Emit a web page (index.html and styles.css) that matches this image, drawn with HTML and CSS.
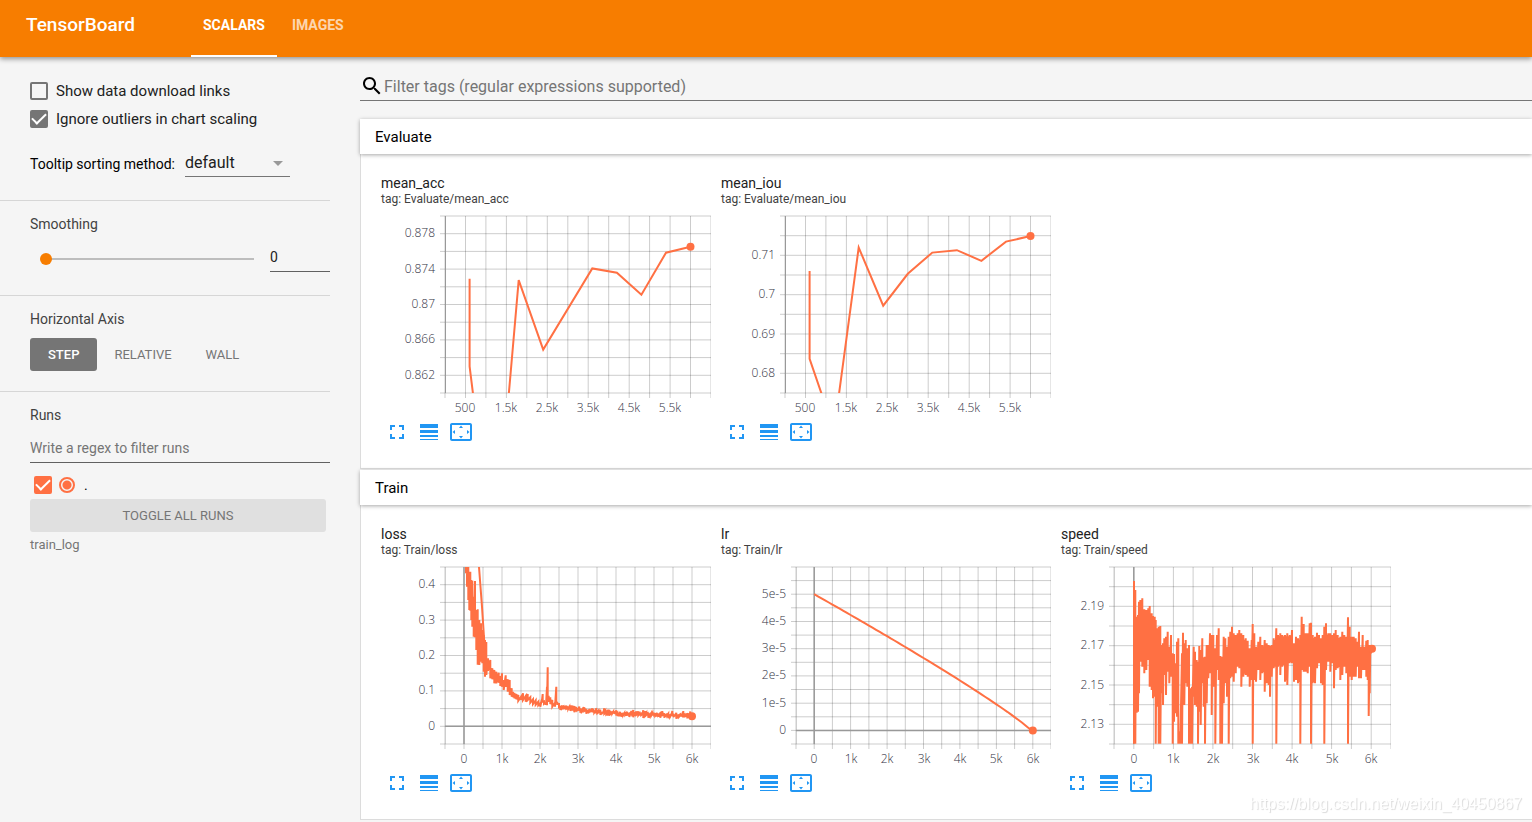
FILE: index.html
```html
<!DOCTYPE html>
<html lang="en">
<head>
<meta charset="utf-8">
<title>TensorBoard</title>
<link rel="stylesheet" href="styles.css">
</head>
<body>
<svg class="sprite" aria-hidden="true">
  <symbol id="i-search" viewBox="0 0 24 24"><path d="M15.5 14h-.79l-.28-.27C15.41 12.59 16 11.11 16 9.5 16 5.91 13.09 3 9.5 3S3 5.91 3 9.5 5.91 16 9.5 16c1.61 0 3.09-.59 4.23-1.57l.27.28v.79l5 4.99L20.49 19l-4.99-5zm-6 0C7.01 14 5 11.99 5 9.5S7.01 5 9.5 5 14 7.01 14 9.5 11.99 14 9.5 14z"/></symbol>
  <symbol id="i-full" viewBox="0 0 24 24"><path d="M7 14H5v5h5v-2H7v-3zm-2-4h2V7h3V5H5v5zm12 7h-3v2h5v-5h-2v3zM14 5v2h3v3h2V5h-5z"/></symbol>
  <symbol id="i-lines" viewBox="0 0 24 24"><path d="M3 17h18v-2H3v2zm0 3h18v-1H3v1zm0-7h18v-3H3v3zm0-9v4h18V4H3z"/></symbol>
  <symbol id="i-fit" viewBox="0 0 24 24"><path d="M12.01 5.5L10 8h4l-1.99-2.5zM18 10v4l2.5-1.99L18 10zM6 10l-2.5 2.01L6 14v-4zm8 6h-4l2.01 2.5L14 16zm7-13H3c-1.1 0-2 .9-2 2v14c0 1.1.9 2 2 2h18c1.1 0 2-.9 2-2V5c0-1.1-.9-2-2-2zm0 16.01H3V4.99h18v14.02z"/></symbol>
</svg>

<header class="topbar">
  <h1 class="brand">TensorBoard</h1>
  <nav class="tabs">
    <a class="tab tab-active" href="#scalars">SCALARS</a>
    <a class="tab" href="#images">IMAGES</a>
  </nav>
</header>

<div class="layout">
  <aside class="sidebar">
    <section class="group group-options">
      <label class="check-row"><input class="check" type="checkbox"><span>Show data download links</span></label>
      <label class="check-row"><input class="check" type="checkbox" checked><span>Ignore outliers in chart scaling</span></label>
      <div class="sort-row">
        <label for="sort">Tooltip sorting method:</label>
        <div class="select-wrap"><select id="sort" class="select"><option>default</option></select></div>
      </div>
    </section>
    <section class="group group-smooth">
      <label class="group-title" for="smooth">Smoothing</label>
      <div class="smooth-row">
        <input id="smooth" class="slider" type="range" min="0" max="1" step="0.001" value="0">
        <input class="smooth-value" type="text" value="0" aria-label="Smoothing value">
      </div>
    </section>
    <section class="group group-axis">
      <h2 class="group-title">Horizontal Axis</h2>
      <div class="axis-row">
        <button class="axis-btn axis-active" type="button">STEP</button>
        <button class="axis-btn" type="button">RELATIVE</button>
        <button class="axis-btn" type="button">WALL</button>
      </div>
    </section>
    <section class="group group-runs">
      <h2 class="group-title">Runs</h2>
      <input class="run-filter" type="text" placeholder="Write a regex to filter runs" aria-label="Filter runs">
      <div class="run-row">
        <input id="run" class="check check-run" type="checkbox" checked>
        <input class="radio" type="radio" name="run" checked aria-label="Show only this run">
        <label class="run-name" for="run">.</label>
      </div>
      <button class="toggle-btn" type="button">TOGGLE ALL RUNS</button>
      <p class="logdir">train_log</p>
    </section>
  </aside>

  <main class="main">
    <div class="tag-filter">
      <svg class="icon icon-search" aria-hidden="true"><use href="#i-search"/></svg>
      <input class="tag-input" type="text" placeholder="Filter tags (regular expressions supported)" aria-label="Filter tags">
    </div>
    <section class="category">
      <button class="category-head" type="button">Evaluate</button>
      <div class="cards" data-group="Evaluate"></div>
    </section>
    <section class="category">
      <button class="category-head" type="button">Train</button>
      <div class="cards" data-group="Train"></div>
    </section>
  </main>
</div>
<div class="watermark">https://blog.csdn.net/weixin_40450867</div>
<script src="charts.js"></script>
</body>
</html>
```
FILE: styles.css
```css
* { box-sizing: border-box; }
body {
  margin: 0;
  min-height: 100vh;
  display: flex;
  flex-direction: column;
  background: #f5f5f5;
  color: #212121;
  font-family: Roboto, "Noto Sans", sans-serif;
  font-size: 14px;
  overflow: hidden;
}
h1, h2, h3, p { margin: 0; font-weight: 400; }
input, button, select { font-family: inherit; color: inherit; margin: 0; }
.sprite { display: none; }

.topbar {
  display: flex;
  height: 57px;
  padding-left: 26px;
  background: #f77d00;
  color: #fff;
  box-shadow: 0 2px 5px rgba(0, 0, 0, .4);
  position: relative;
  z-index: 2;
}
.brand { width: 165px; font-size: 19px; line-height: 50px; font-weight: 500; }
.tabs { display: flex; }
.tab {
  padding: 0 12px;
  line-height: 50px;
  font-weight: 700;
  color: rgba(255, 255, 255, .7);
  text-decoration: none;
  margin-right: 3px;
}
.tab-active { color: #fff; border-bottom: 2px solid #fff; }

.layout { flex: 1; display: flex; gap: 30px; }
.sidebar { width: 330px; flex: none; }
.group { padding-left: 30px; border-bottom: 1px solid #d6d6d6; }
.group-options { padding-top: 20px; height: 144px; }
.check-row { display: flex; align-items: center; gap: 8px; height: 28px; font-size: 15px; }
.check {
  appearance: none;
  width: 18px;
  height: 18px;
  border: 2px solid #757575;
  border-radius: 2px;
  display: grid;
  place-items: center;
}
.check:checked { background: #757575; }
.check:checked::after {
  content: "";
  width: 6px;
  height: 12px;
  margin-top: -4px;
  border: solid #fff;
  border-width: 0 2px 2px 0;
  rotate: 45deg;
}
.sort-row { display: flex; align-items: center; gap: 10px; margin-top: 16px; height: 28px; color: #000; }
.sort-row label { padding-top: 2px; }
.select-wrap { flex: none; position: relative; width: 105px; }
.select-wrap::after {
  content: "";
  position: absolute;
  right: 7px;
  top: 12px;
  border: 5px solid transparent;
  border-top-color: #999;
  border-bottom: 0;
}
.select {
  appearance: none;
  width: 100%;
  height: 28px;
  padding: 0;
  border: 0;
  border-bottom: 1px solid #757575;
  background: none;
  font-size: 16px;
  color: #212121;
}
.group-title { display: block; font-size: 14px; line-height: 20px; color: #424242; }
.group-smooth { padding-top: 13px; height: 95px; }
.smooth-row { display: flex; align-items: center; gap: 16px; padding-left: 10px; margin-top: 11px; }
.slider { appearance: none; flex: 1; min-width: 0; height: 12px; background: none; }
.slider::-webkit-slider-runnable-track { height: 2px; background: linear-gradient(#bdbdbd, #bdbdbd) 6px 0 no-repeat; }
.slider::-webkit-slider-thumb { appearance: none; width: 12px; height: 12px; margin-top: -5px; border-radius: 50%; background: #f77d00; }
.smooth-value { width: 60px; height: 27px; padding: 0 0 2px; border: 0; border-bottom: 1px solid #616161; background: none; font-size: 14px; }
.group-axis { padding-top: 13px; height: 96px; }
.axis-row { display: flex; margin-top: 9px; }
.axis-btn { height: 33px; padding: 0 17px; border: 0; border-radius: 3px; background: none; font-size: 13px; color: #757575; }
.axis-active { padding: 0 18px; background: #757575; color: #fff; font-weight: 500; }
.group-runs { padding-top: 13px; border: 0; }
.run-filter { display: block; width: 100%; height: 27px; margin-top: 11px; padding: 0 0 2px; border: 0; border-bottom: 1px solid #616161; background: none; font-size: 14px; }
.run-filter::placeholder, .tag-input::placeholder { color: #757575; opacity: 1; }
.run-row { display: flex; align-items: center; height: 36px; padding: 8px 4px 0; gap: 7px; }
.check-run, .check-run:checked { border-color: #ff7043; background: #ff7043; }
.radio { appearance: none; width: 16px; height: 16px; border: 2px solid #ff7043; border-radius: 50%; background: radial-gradient(#ff7043 0 4px, transparent 5px); }
.run-name { padding-left: 2px; color: #000; }
.toggle-btn { display: block; width: calc(100% - 4px); height: 33px; border: 0; border-radius: 3px; background: #e0e0e0; color: #757575; font-size: 13px; }
.logdir { margin-top: 5px; font-size: 13px; line-height: 16px; color: #757575; }

.main { flex: 1; min-width: 0; padding-top: 17px; }
.tag-filter { display: flex; align-items: center; height: 27px; padding-bottom: 2px; border-bottom: 1px solid #757575; }
.icon { width: 24px; height: 24px; display: block; fill: currentColor; }
.icon-search { flex: none; color: #000; }
.tag-input { flex: 1; min-width: 0; padding: 0; border: 0; background: none; font-size: 16px; }
.category { margin-top: 1px; }
.tag-filter + .category { margin-top: 18px; }
.category-head {
  display: block;
  width: 100%;
  height: 35px;
  padding: 0 15px;
  border: 0;
  background: #fff;
  color: #000;
  text-align: left;
  font-size: 15px;
  box-shadow: 0 1px 4px rgba(0, 0, 0, .35);
  position: relative;
}
.cards { display: flex; flex-wrap: wrap; gap: 10px; padding: 21px 20px 24px; background: #fff; border: solid #dcdcdc; border-width: 0 0 1px 1px; }
.card { width: 330px; }
.card-title { font-size: 14px; line-height: 16px; }
.card-tag { font-size: 12px; line-height: 16px; color: #424242; }
.chart { display: block; width: 330px; height: 213px; }
.actions { display: flex; gap: 8px; padding-left: 4px; }
.action { padding: 0; border: 0; background: none; color: #2196f3; }
.grid { stroke: #000; stroke-opacity: .2; fill: none; }
.axis { stroke: #999; }
.zero { stroke: #999; stroke-width: 1.5; }
.trace { fill: none; stroke: #ff7043; stroke-width: 2; }
.dot { fill: #ff7043; }
.tick { font-family: "Open Sans", sans-serif; font-size: 12px; font-weight: 300; fill: #32313f; }
.tick-x { text-anchor: middle; }
.tick-y { text-anchor: end; }

.watermark {
  position: fixed;
  right: 10px;
  bottom: 9px;
  color: #fff;
  font-family: "Liberation Sans", sans-serif;
  font-size: 16px;
  line-height: 18px;
  text-shadow: 1px 1px 1px rgba(0, 0, 0, .15);
}
```
FILE: charts.js
```js
const TOP = 9, BOTTOM = 186, RIGHT = 330;

// Noisy traces: [x, top, bottom] bands, in thirds of a pixel.
const lossBand = [
  [273,141,160],[276,141,200],[280,141,240],[283,155,270],[286,155,272],[289,180,300],[292,182,320],[296,230,350],[300,183,352],
  [304,270,390],[308,268,434],[313,300,435],[318,310,425],[322,330,430],[326,345,455],[330,360,470],[334,366,465],
  [339,415,452],[346,420,475],[352,445,478],[358,450,490],[364,455,490],[371,458,488],[376,468,498],[381,460,500],
  [386,480,510],[392,466,500],[398,478,515],[404,480,525],[410,505,530],[414,515,532],[418,518,535],[424,522,538],
  [430,525,542],[438,530,540],[444,520,540],[452,528,545],[458,522,540],[466,532,548],[474,538,552],[482,541,554],
  [490,545,556],[496,550,560],[500,540,548],[503,522,545],[507,544,552],[513,548,555],[516,500,556],[518,442,530],
  [521,530,545],[526,532,552],[532,540,560],[540,548,560],[544,500,545],[547,548,552],[552,552,562]
];
const speedBand = [
  [237,183,671],[241,210,671],[245,290,578],[249,285,575],[252,245,520],[256,240,425],[262,235,440],[268,268,460],[274,270,450],
  [280,265,420],[284,258,500],[290,280,510],[294,288,535],[299,290,530],[302,300,671],[307,325,560],[311,320,671],[316,318,671],
  [321,375,520],[324,370,555],[328,355,465],[333,350,525],[338,335,455],[343,380,490],[348,345,470],[353,400,671],[357,402,605],
  [361,430,580],[366,365,590],[370,355,671],[376,636,671],[381,400,671],[384,338,540],[388,370,555],[392,360,490],[397,385,500],
  [402,375,671],[406,505,671],[411,500,671],[416,380,530],[420,395,555],[425,420,560],[429,425,671],[433,378,575],[437,390,615],
  [442,355,490],[446,412,560],[450,410,671],[455,375,550],[460,375,475],[465,340,460],[470,345,585],[475,345,500],[481,385,671],
  [486,345,450],[491,325,480],[496,408,671],[501,410,671],[506,350,550],[511,355,490],[516,380,530],[521,350,671],[526,335,475],
  [531,320,470],[536,340,485],[542,345,460],[548,340,440],[553,330,445],[559,340,500],[565,345,470],[572,355,465],[578,362,470],
  [584,385,500],[590,360,480],[593,312,671],[598,340,480],[603,380,485],[610,365,450],[616,350,480],[622,375,460],[629,360,515],
  [635,370,490],[641,375,495],[645,378,530],[650,375,470],[656,355,445],[661,360,440],[664,325,671],[669,345,440],[676,340,465],
  [682,345,440],[690,345,485],[697,340,495],[704,345,430],[711,330,430],[717,370,485],[723,350,480],[729,355,490],[736,345,671],
  [740,290,450],[746,312,455],[752,340,455],[758,340,460],[764,310,440],[768,308,671],[773,345,490],[780,350,490],[786,338,445],
  [792,345,430],[798,355,490],[803,345,495],[808,320,671],[813,310,450],[820,340,425],[826,340,455],[832,345,430],[837,340,505],
  [842,330,450],[848,345,445],[856,350,480],[862,335,465],[868,345,440],[874,350,460],[879,292,671],[884,320,470],[890,350,480],
  [896,350,470],[902,355,470],[907,365,440],[912,335,475],[918,380,475],[923,345,450],[928,380,450],[934,362,470],[938,360,480],
  [941,375,588],[944,375,520],[948,378,400],[951,386,386]
];
const third = (x, y) => `${(x / 3 - 6).toFixed(1)},${(y / 3 - 38).toFixed(1)}`;
const zigzag = band => band.flatMap(([x, a, b]) => [third(x, a), third(x, b)]).join(" ");

// Fill each gap of the speed band so that the trace reads as one dense mass.
const dense = band => band.flatMap(([x, a, b], i) => {
  const next = band[i + 1];
  if (!next || next[0] - x < 4 || a > 600 || next[1] > 600) return [[x, a, b]];
  return [[x, a, b], [(x + next[0]) / 2, Math.max(a, next[1]) + 4, Math.min(b, next[2]) - 4]];
});

// Flat tail of the loss curve with a little repeatable jitter.
let seed = 7;
const rand = () => (seed = (seed * 16807) % 2147483647) / 2147483647;
for (let x = 556; x <= 948; x += 3) {
  const mid = 588 - 27 * Math.exp(-(x - 556) / 140);
  lossBand.push([x, mid - 1 - rand() ** 3 * 12, mid + 1 + rand() ** 3 * 10]);
}
lossBand.push([951, 589, 589]);

const thousands = [0, 1000, 2000, 3000, 4000, 5000, 6000];
const halves = [500, 1500, 2500, 3500, 4500, 5500];
const kilo = v => (v >= 1000 ? v / 1000 + "k" : String(v));
const lr = Array.from({ length: 61 }, (_, i) => [i * 100, 5 * Math.max(0, 1 - i / 59.5) ** 0.9]);

const charts = [
  { group: "Evaluate", name: "mean_acc", left: 64, x: [0, 6500], y: [0.86, 0.88], rows: 10, xt: halves,
    yt: [[0.878, "0.878"], [0.874, "0.874"], [0.87, "0.87"], [0.866, "0.866"], [0.862, "0.862"]],
    data: [[600,.8729],[600,.863],[1200,.8408],[1800,.87275],[2400,.8649],[3600,.87408],[4200,.87358],[4800,.8711],[5400,.87585],[6000,.87653]] },
  { group: "Evaluate", name: "mean_iou", left: 64, x: [0, 6500], y: [0.675, 0.72], rows: 9, xt: halves,
    yt: [[0.71, "0.71"], [0.7, "0.7"], [0.69, "0.69"], [0.68, "0.68"]],
    data: [[600,.706],[600,.6837],[1200,.6655],[1800,.712],[2400,.6972],[3000,.7053],[3600,.7107],[4200,.7113],[4800,.7086],[5400,.7135],[6000,.7149]] },
  { group: "Train", name: "loss", left: 64, x: [-500, 6500], y: [-0.05, 0.45], rows: 10, xt: thousands, zero: true,
    yt: [[0.4, "0.4"], [0.3, "0.3"], [0.2, "0.2"], [0.1, "0.1"], [0, "0"]],
    raw: [zigzag(lossBand), [third(312, 141), third(321, 260), third(330, 400)].join(" ")], end: [951, 589] },
  { group: "Train", name: "lr", left: 75, x: [-500, 6500], y: [-0.5, 6], rows: 13, xt: thousands, zero: true,
    yt: [[5, "5e-5"], [4, "4e-5"], [3, "3e-5"], [2, "2e-5"], [1, "1e-5"], [0, "0"]], data: lr },
  { group: "Train", name: "speed", left: 53, x: [-500, 6500], y: [2.12, 2.21], rows: 9, xt: thousands,
    yt: [[2.19, "2.19"], [2.17, "2.17"], [2.15, "2.15"], [2.13, "2.13"]], raw: [zigzag(dense(speedBand))], end: [951, 386] }
];

function draw(c) {
  const sx = v => c.left + (v - c.x[0]) / (c.x[1] - c.x[0]) * (RIGHT - c.left);
  const sy = v => BOTTOM - (v - c.y[0]) / (c.y[1] - c.y[0]) * (BOTTOM - TOP);
  let grid = "";
  for (let v = c.x[0]; v <= c.x[1]; v += 500) grid += `M${sx(v).toFixed(1)} ${TOP}V${BOTTOM + 5}`;
  for (let i = 0; i <= c.rows; i++) grid += `M${c.left - 5} ${(TOP + (BOTTOM - TOP) * i / c.rows).toFixed(1)}H${RIGHT}`;
  let out = `<path class="grid" d="${grid}"/><path class="axis" d="M${c.left + .5} ${TOP}V${BOTTOM}" stroke-opacity="${c.x[0] ? .3 : 1}"/>`;
  if (c.x[0] < 0) out += `<path class="zero" d="M${sx(0)} ${TOP}V${BOTTOM}"/>`;
  if (c.zero) out += `<path class="zero" d="M${c.left} ${sy(0)}H${RIGHT}"/>`;
  const lines = c.raw || [c.data.map(([x, y]) => `${sx(x).toFixed(1)},${sy(y).toFixed(1)}`).join(" ")];
  const id = "clip-" + c.name;
  out += `<clipPath id="${id}"><rect x="${c.left}" y="${TOP}" width="${RIGHT - c.left}" height="${BOTTOM - TOP}"/></clipPath><g clip-path="url(#${id})">`;
  for (const p of lines) out += `<polyline class="trace" points="${p}"/>`;
  const [ex, ey] = (c.end ? third(...c.end) : lines[0].split(" ").pop()).split(",");
  out += `<circle class="dot" cx="${ex}" cy="${ey}" r="4"/></g>`;
  for (const v of c.xt) out += `<text class="tick tick-x" x="${sx(v).toFixed(0)}" y="205">${kilo(v)}</text>`;
  for (const [v, t] of c.yt) out += `<text class="tick tick-y" x="${c.left - 10}" y="${Math.floor(sy(v) + 4)}">${t}</text>`;
  return `<svg class="chart" viewBox="0 0 330 213" role="img" aria-label="${c.name}">${out}</svg>`;
}

const action = (icon, label) => `<button class="action" type="button" aria-label="${label}"><svg class="icon"><use href="#${icon}"/></svg></button>`;
for (const c of charts) {
  const card = document.createElement("article");
  card.className = "card";
  card.innerHTML = `<h3 class="card-title">${c.name}</h3><p class="card-tag">tag: ${c.group}/${c.name}</p>${draw(c)}
    <div class="actions">${action("i-full", "Expand")}${action("i-lines", "Toggle log scale")}${action("i-fit", "Fit domain to data")}</div>`;
  document.querySelector(`[data-group="${c.group}"]`).append(card);
}
```
